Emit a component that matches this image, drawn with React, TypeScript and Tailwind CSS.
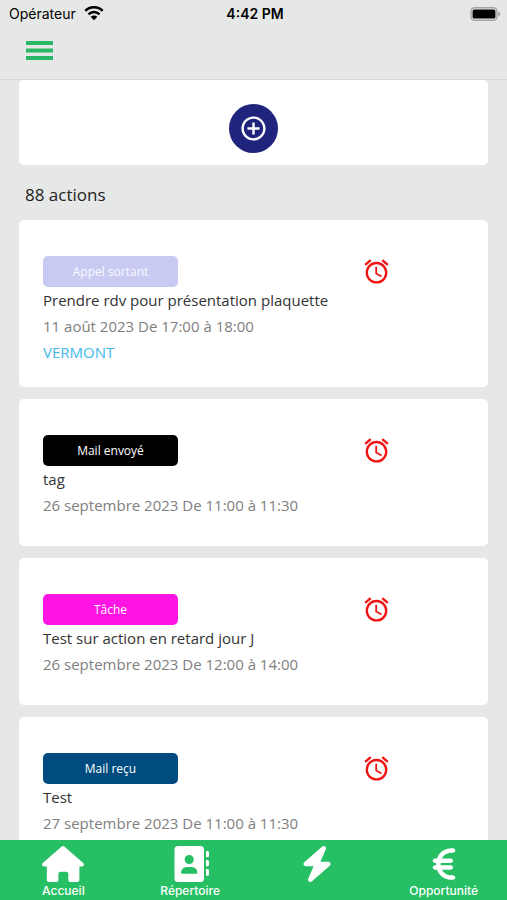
import { FaBolt, FaEuroSign } from 'react-icons/fa6';
import { MdAddCircleOutline, MdAlarm } from 'react-icons/md';

interface Action {
  type: string;
  badge: string;
  title: string;
  date: string;
  company?: string;
}

const ACTIONS: Action[] = [
  {
    type: 'Appel sortant',
    badge: 'bg-[#c8caf1] text-white/90',
    title: 'Prendre rdv pour présentation plaquette',
    date: '11 août 2023 De 17:00 à 18:00',
    company: 'VERMONT',
  },
  { type: 'Mail envoyé', badge: 'bg-black text-white', title: 'tag', date: '26 septembre 2023 De 11:00 à 11:30' },
  { type: 'Tâche', badge: 'bg-[#ff14e4] text-white', title: 'Test sur action en retard jour J', date: '26 septembre 2023 De 12:00 à 14:00' },
  { type: 'Mail reçu', badge: 'bg-[#004b80] text-white', title: 'Test', date: '27 septembre 2023 De 11:00 à 11:30' },
];

const TABS = [
  { label: 'Accueil', name: 'Accueil', Icon: HomeIcon },
  { label: 'Répertoire', name: 'Répertoire', Icon: ContactsIcon },
  { label: '', name: 'Actions', Icon: FaBolt },
  { label: 'Opportunité', name: 'Opportunité', Icon: FaEuroSign },
];

function HomeIcon({ className }: { className?: string }) {
  return (
    <svg viewBox="0 0 42 36" className={className} fill="currentColor" aria-hidden="true">
      <path d="M19.400 .7Q21 -.6 22.600 .7L41.200 17Q42.300 18.200 41.700 19.400Q41.300 20.400 39.800 20.400H37.400V33.400Q37.400 36 34.800 36H28.300Q26.300 36 26.300 34V28Q26.300 25.700 24 25.700H18.700Q16.400 25.700 16.400 28V34Q16.400 36 14.400 36H7.400Q4.800 36 4.800 33.400V20.400H2.200Q.7 20.400 .3 19.400Q-.3 18.200 .8 17Z" />
    </svg>
  );
}

function ContactsIcon({ className }: { className?: string }) {
  return (
    <svg viewBox="0 0 38 36" className={className} fill="currentColor" aria-hidden="true">
      <path
        fillRule="evenodd"
        d="M7 0H29.500A3.500 3.500 0 0 1 33 3.500V32.500A3.500 3.500 0 0 1 29.500 36H7A3.500 3.500 0 0 1 3.500 32.500V3.500A3.500 3.500 0 0 1 7 0ZM18.200 9A4.600 4.600 0 1 0 18.200 18.200A4.600 4.600 0 1 0 18.200 9ZM15.700 21A5.600 5.600 0 0 0 10 26.400Q10 27.700 11.400 27.700H25Q26.400 27.700 26.400 26.400A5.600 5.600 0 0 0 20.700 21Z"
      />
      <path d="M35 5H36.500Q38 5 38 6.500V9.800Q38 11.300 36.500 11.300H35ZM35 14H36.500Q38 14 38 15.500V18.700Q38 20.200 36.500 20.200H35ZM35 23H36.500Q38 23 38 24.500V28.200Q38 29.700 36.500 29.700H35Z" />
    </svg>
  );
}

function WifiIcon() {
  return (
    <svg viewBox="0 0 20 15" className="w-5 h-[15px]" aria-hidden="true">
      <g fill="none" stroke="#000" strokeWidth="2.600">
        <path d="M1.300 4.900A12.300 12.300 0 0 1 18.700 4.900" />
        <path d="M4.500 8.300A7.800 7.800 0 0 1 15.500 8.300" />
      </g>
      <path d="M10 14.200L6.700 10.800A4.600 4.600 0 0 1 13.300 10.800Z" />
    </svg>
  );
}

function BatteryIcon() {
  return (
    <svg viewBox="0 0 31 14" className="w-[31px] h-[14px]" aria-hidden="true">
      <rect x="1" y=".8" width="26" height="12.400" rx="3.500" fill="none" stroke="#a3a5a4" strokeWidth="1.400" />
      <rect x="2.600" y="2.400" width="22.800" height="9.200" rx="1.500" />
      <path d="M28.300 4.500Q30.300 5.200 30.300 7T28.300 9.500Z" fill="#a3a5a4" />
    </svg>
  );
}

function StatusBar() {
  return (
    <div className="grid grid-cols-3 items-center h-[27px] pl-[9px] pr-[6px] font-['Inter',sans-serif] text-sm text-black">
      <div className="flex items-center gap-2">
        <span>Opérateur</span>
        <WifiIcon />
      </div>
      <span className="text-center font-semibold">4:42 PM</span>
      <div className="flex justify-end">
        <BatteryIcon />
      </div>
    </div>
  );
}

function ActionCard({ action }: { action: Action }) {
  return (
    <article className="min-h-[147px] shrink-0 rounded-[5px] bg-white px-6 pt-9 pb-[22px] text-[15px] leading-[26px]">
      <div className="grid grid-cols-12 items-center">
        <span className={`col-span-7 w-[135px] h-[31px] rounded-[5px] text-center text-xs leading-[31px] ${action.badge}`}>
          {action.type}
        </span>
        <MdAlarm className="col-span-5 justify-self-center size-[29px] text-[#f01414]" />
      </div>
      <h2 className="text-[#333]">{action.title}</h2>
      <p className="text-[#808080]">{action.date}</p>
      {action.company && (
        <a href="#" className="block text-[#41b8e8]">{action.company}</a>
      )}
    </article>
  );
}

export default function App() {
  return (
    <div className="flex flex-col h-screen overflow-hidden bg-[#e6e8e7] font-['Open_Sans',sans-serif]">
      <header className="shrink-0 border-b border-[#d6d8d7]">
        <StatusBar />
        <div className="flex items-start h-[52px] px-[26px] pt-[14px]">
          <button type="button" aria-label="Menu">
            <svg viewBox="0 0 27 19" className="w-[27px] h-[19px]" fill="#28b765" aria-hidden="true">
              <path d="M0 0H27V4H0ZM0 7.500H27V11.500H0ZM0 15H27V19H0Z" />
            </svg>
          </button>
        </div>
      </header>

      <main className="flex-1 min-h-0 overflow-hidden px-[19px]">
        <div className="flex justify-center items-end h-[85px] pb-3 rounded-[5px] bg-white">
          <button
            type="button"
            aria-label="Ajouter une action"
            className="flex items-center justify-center size-[49px] rounded-full bg-[#20247c] text-white"
          >
            <MdAddCircleOutline className="size-[29px]" />
          </button>
        </div>

        <h1 className="px-1.5 pt-4 pb-3 text-[17px] leading-[27px] text-[#222]">88 actions</h1>

        <div className="flex flex-col gap-3">
          {ACTIONS.map((a) => (
            <ActionCard key={a.type} action={a} />
          ))}
        </div>
      </main>

      <nav className="shrink-0 grid grid-cols-4 h-[60px] bg-[#26bf63] text-white font-['Inter',sans-serif]">
        {TABS.map(({ label, name, Icon }) => (
          <a key={name} href="#" aria-label={name} className="flex flex-col items-center pt-1.5">
            <Icon className="w-auto h-9" />
            <span className="text-xs leading-[18px] font-medium">{label}</span>
          </a>
        ))}
      </nav>
    </div>
  );
}
